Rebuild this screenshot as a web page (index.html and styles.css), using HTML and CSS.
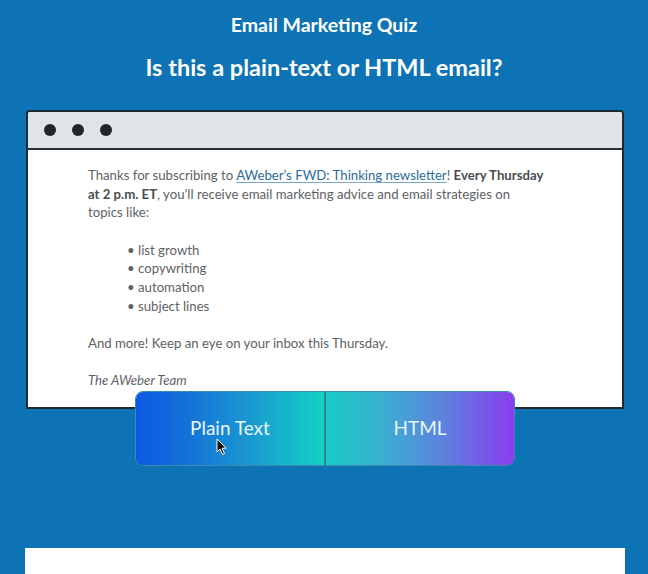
FILE: index.html
```html
<!DOCTYPE html>
<html lang="en">
<head>
<meta charset="utf-8">
<title>Email Marketing Quiz</title>
<link rel="stylesheet" href="styles.css">
</head>
<body>
<main class="page">
  <h1 class="quiz-label">Email Marketing Quiz</h1>
  <h2 class="question">Is this a plain-text or HTML email?</h2>

  <section class="window">
    <div class="titlebar">
      <span class="dot"></span><span class="dot"></span><span class="dot"></span>
    </div>
    <div class="content">
      <p>Thanks for subscribing to <a class="link" href="#">AWeber’s FWD: Thinking newsletter</a>! <b>Every Thursday</b> <b>at 2 p.m. ET</b>, you’ll receive email marketing advice and email strategies on<br>topics like:</p>
      <ul class="topics">
        <li>• list growth</li>
        <li>• copywriting</li>
        <li>• automation</li>
        <li>• subject lines</li>
      </ul>
      <p>And more! Keep an eye on your inbox this Thursday.</p>
      <p class="sign"><i>The AWeber Team</i></p>
    </div>
  </section>

  <div class="choices">
    <button class="choice plain">Plain Text</button>
    <span class="divider"></span>
    <button class="choice html">HTML</button>
    <svg class="cursor" width="12" height="18" viewBox="0 0 12 18" aria-hidden="true">
      <path d="M1 1 L1 14 L4 11 L6.5 16.5 L8.5 15.6 L6 10.2 L10.2 10.2 Z" fill="#111" stroke="#fff" stroke-width="1" stroke-linejoin="round"/>
    </svg>
  </div>

  <div class="next-card"></div>
</main>
</body>
</html>
```

FILE: styles.css
```css
html, body {
  margin: 0;
  padding: 0;
}
body {
  background: #0d73b4;
  font-family: "Lato", "Open Sans", sans-serif;
  color: #fff;
  overflow: hidden;
}
.page {
  width: 648px;
  height: 574px;
  display: flex;
  flex-direction: column;
}
.quiz-label {
  margin: 13px 0 0;
  font-size: 19.5px;
  line-height: 24px;
  font-weight: 700;
  text-align: center;
}
.question {
  margin: 15px 0 0;
  font-size: 23.5px;
  line-height: 30px;
  font-weight: 700;
  text-align: center;
}
.window {
  margin: 28px 24px 0 26px;
  border: 2px solid #1d2a34;
  border-radius: 4px 4px 0 0;
  background: #fff;
}
.titlebar {
  height: 36px;
  background: #dfe5e6;
  border-bottom: 2px solid #26323b;
  border-radius: 2px 2px 0 0;
  display: flex;
  align-items: center;
  gap: 16px;
  padding-left: 16px;
}
.dot {
  width: 12px;
  height: 12px;
  border-radius: 50%;
  background: #1f252b;
}
.content {
  padding: 16px 70px 17px 60px;
  color: #5e6265;
  font-size: 13.2px;
  line-height: 18.65px;
}
.content p {
  margin: 0 0 18.65px;
}
.content p.sign {
  margin: 0;
}
.content b {
  color: #4a4d50;
}
.link {
  color: #2b6c9c;
  text-decoration: underline;
  text-decoration-color: #7da6c4;
  text-underline-offset: 2px;
}
.topics {
  list-style: none;
  margin: 0 0 18.65px;
  padding-left: 39px;
}
.choices {
  position: relative;
  width: 380px;
  height: 75px;
  margin: -18px 0 0 135px;
  display: flex;
  border: 1px solid #3c8ab0;
  border-radius: 8px;
  overflow: hidden;
  box-sizing: border-box;
}
.choice {
  flex: 1;
  border: 0;
  margin: 0;
  padding: 0 0 2px;
  color: #eaf6ff;
  font-family: "Lato", "Open Sans", sans-serif;
  font-size: 19px;
  cursor: pointer;
}
.plain {
  background: linear-gradient(90deg, #0b58e2 0%, #1475d8 30%, #1a98d0 60%, #12d2c4 100%);
}
.html {
  background: linear-gradient(90deg, #18cbc6 0%, #3aaed0 30%, #5a86dc 60%, #8a3cee 100%);
}
.divider {
  width: 2px;
  background: #3f7c8e;
}
.cursor {
  position: absolute;
  left: 80px;
  top: 46px;
}
.next-card {
  margin: 82px 23px 0 25px;
  flex: 1;
  background: #fff;
}
```
